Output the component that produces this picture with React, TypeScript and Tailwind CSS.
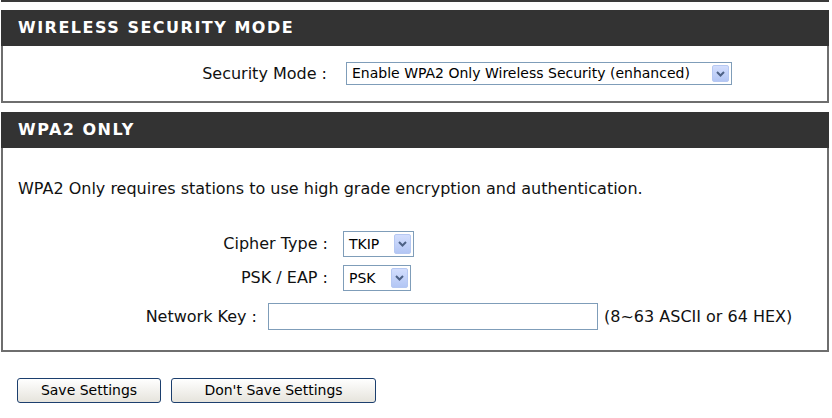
import React from "react"

function Arrow() {
  return (
    <span className="absolute right-[2px] top-[2px] bottom-[2px] w-[17px] rounded-[2px] border border-[#b6c8f2] bg-gradient-to-b from-[#d3defd] to-[#b3c6f4] flex items-center justify-center">
      <svg width="9" height="6" viewBox="0 0 9 6">
        <path d="M1 1 L4.5 4.5 L8 1" fill="none" stroke="#4d6185" strokeWidth="2" />
      </svg>
    </span>
  )
}

function Select({ value, width, height }: { value: string; width: string; height: string }) {
  return (
    <div className={`relative ${width} ${height} border border-[#7f9db9] bg-white flex items-center pl-[5px] text-[14px] text-black`}>
      {value}
      <Arrow />
    </div>
  )
}

function BoxHeader({ title }: { title: string }) {
  return (
    <div className="h-[36px] bg-[#333333] flex items-center pl-[17px]">
      <h2 className="text-white font-bold text-[16px] tracking-[1.5px] leading-none">{title}</h2>
    </div>
  )
}

export default function App() {
  return (
    <div className="w-[832px] h-[418px] bg-white text-[#111] font-['DejaVu_Sans',sans-serif]">
      <div className="ml-[1px] w-[828px] h-[2px] bg-[#3a3a3a]" />

      {/* Wireless security mode */}
      <div className="ml-[1px] mt-[8px] w-[828px]">
        <BoxHeader title="WIRELESS SECURITY MODE" />
        <div className="h-[57px] border-x-2 border-b-2 border-[#6e6e6e] flex items-center">
          <span className="w-[324px] text-right text-[16px]">Security Mode :</span>
          <div className="ml-[19px]">
            <Select value="Enable WPA2 Only Wireless Security (enhanced)" width="w-[386px]" height="h-[23px]" />
          </div>
        </div>
      </div>

      {/* WPA2 only */}
      <div className="ml-[1px] mt-[9px] w-[828px]">
        <BoxHeader title="WPA2 ONLY" />
        <div className="h-[204px] border-x-2 border-b-2 border-[#6e6e6e] pt-[30px] text-[16px]">
          <p className="pl-[15px] leading-[22px]">
            WPA2 Only requires stations to use high grade encryption and authentication.
          </p>
          <div className="mt-[31px] flex flex-col gap-[8px]">
            <div className="flex items-center">
              <span className="w-[325px] text-right">Cipher Type :</span>
              <div className="ml-[15px]">
                <Select value="TKIP" width="w-[71px]" height="h-[26px]" />
              </div>
            </div>
            <div className="flex items-center">
              <span className="w-[325px] text-right">PSK / EAP :</span>
              <div className="ml-[15px]">
                <Select value="PSK" width="w-[68px]" height="h-[26px]" />
              </div>
            </div>
            <div className="mt-[4px] flex items-center">
              <span className="w-[254px] text-right">Network Key :</span>
              <input
                type="text"
                className="ml-[11px] w-[330px] h-[27px] border border-[#7f9db9] bg-white outline-none"
              />
              <span className="ml-[6px]">(8~63 ASCII or 64 HEX)</span>
            </div>
          </div>
        </div>
      </div>

      {/* Buttons */}
      <div className="mt-[26px] pl-[17px] flex gap-[10px]">
        <button className="w-[144px] h-[25px] rounded-[3px] border border-[#1c3f6e] bg-gradient-to-b from-white to-[#e6e4dc] text-[14px] text-black">
          Save Settings
        </button>
        <button className="w-[205px] h-[25px] rounded-[3px] border border-[#1c3f6e] bg-gradient-to-b from-white to-[#e6e4dc] text-[14px] text-black">
          Don't Save Settings
        </button>
      </div>
    </div>
  )
}
